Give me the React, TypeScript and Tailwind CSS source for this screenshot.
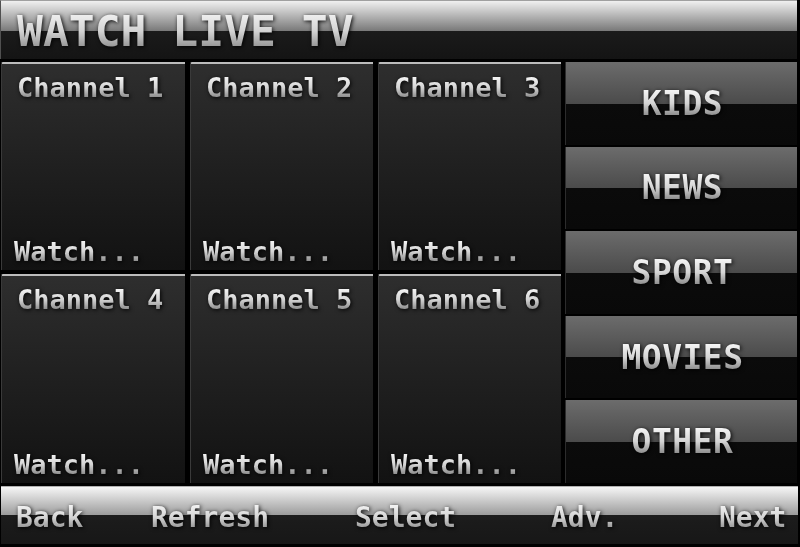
import React from "react";

const channels = ["Channel 1", "Channel 2", "Channel 3", "Channel 4", "Channel 5", "Channel 6"];
const categories = ["KIDS", "NEWS", "SPORT", "MOVIES", "OTHER"];

// chrome text: white-to-grey fill with a dark glow
function Glow({ children, className = "" }: { children: React.ReactNode; className?: string }) {
  return (
    <span
      className={`leading-none bg-linear-to-b from-[#fdfdfd] via-[#d4d4d4] to-[#747474] bg-clip-text text-transparent drop-shadow-[1px_1px_2px_rgba(0,0,0,0.95)] ${className}`}
    >
      {children}
    </span>
  );
}

function Tile({ name }: { name: string }) {
  return (
    <div className="flex flex-col justify-between border-t-2 border-t-[#bcbcbc] border-l border-l-[#3a3a3a] rounded-tl-[2px] bg-linear-to-b from-[#2e2e2e] to-[#121212] pt-[10px] pb-[5px]">
      <Glow className="pl-[15px] text-[27px]">{name}</Glow>
      <Glow className="pl-[12px] text-[27px]">Watch...</Glow>
    </div>
  );
}

function CategoryButton({ label }: { label: string }) {
  return (
    <button className="flex-1 flex items-center justify-center border-l border-l-[#2c2c2c] bg-[linear-gradient(to_bottom,#6c6c6c_0%,#4b4b4b_50%,#0b0b0b_50%,#090909_100%)]">
      <Glow className="text-[33px] tracking-[0.5px] pl-[2px]">{label}</Glow>
    </button>
  );
}

export default function App() {
  return (
    <div className="w-[800px] h-[547px] bg-black flex flex-col overflow-hidden font-['DejaVu_Sans_Mono','Liberation_Mono',monospace] font-bold">
      {/* Title bar */}
      <header className="h-[59px] mr-[3px] border-t border-t-[#a0a0a0] border-l border-l-[#505050] bg-[linear-gradient(to_bottom,#f0f0f0_0%,#7a7a7a_51%,#1b1b1b_51%,#141414_100%)] pl-[16px] pt-[9px]">
        <Glow className="text-[43px]">WATCH LIVE TV</Glow>
      </header>

      {/* Channels + categories */}
      <div className="flex mt-[3px] h-[421px] ml-[1px]">
        <div className="grid grid-cols-[184px_183px_183px] grid-rows-[208px_209px] gap-x-[5px] gap-y-[4px]">
          {channels.map((c) => (
            <Tile key={c} name={c} />
          ))}
        </div>
        <div className="ml-[4px] w-[232px] flex flex-col gap-[2px]">
          {categories.map((c) => (
            <CategoryButton key={c} label={c} />
          ))}
        </div>
      </div>

      {/* Bottom bar */}
      <footer className="mt-[3px] h-[58px] mr-[2px] ml-[1px] border-t border-t-[#b0b0b0] bg-[linear-gradient(to_bottom,#f6f6f6_0%,#9a9a9a_50%,#1c1c1c_50%,#171717_100%)] flex items-start pt-[10px] pl-[15px] text-[28px]">
        <span className="w-[135px]"><Glow>Back</Glow></span>
        <span className="w-[204px]"><Glow>Refresh</Glow></span>
        <span className="w-[196px]"><Glow>Select</Glow></span>
        <span className="w-[168px]"><Glow>Adv.</Glow></span>
        <span><Glow>Next</Glow></span>
      </footer>
    </div>
  );
}
